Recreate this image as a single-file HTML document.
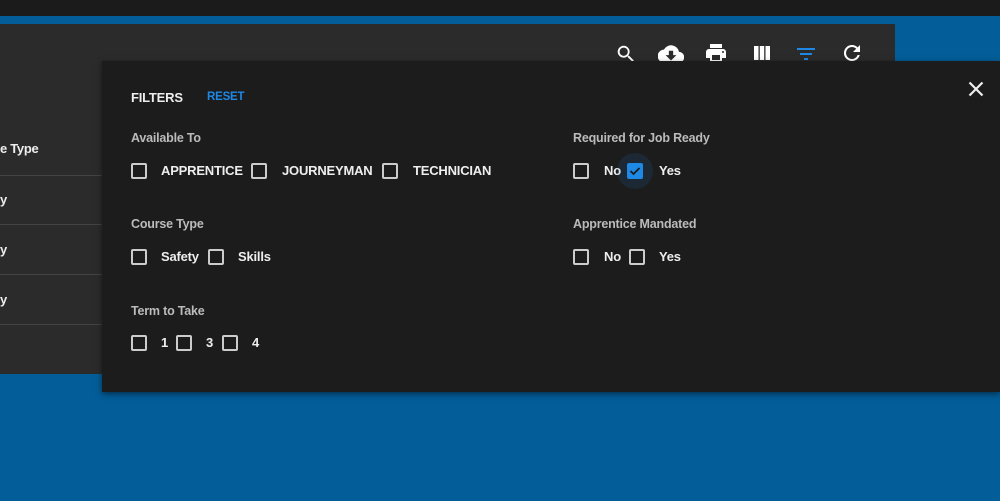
<!DOCTYPE html>
<html><head><style>
*{margin:0;padding:0;box-sizing:border-box}
body{width:1000px;height:501px;background:#035d98;font-family:"Liberation Sans",Roboto,sans-serif;position:relative;overflow:hidden;color:#eee}
.top{position:absolute;left:0;top:0;width:1000px;height:16px;background:#1b1b1b}
.card{position:absolute;left:0;top:24px;width:895px;height:350px;background:#2b2b2b}
.row{position:absolute;left:0;width:102px;border-top:1px solid #444}
.ct{position:absolute;font-size:13px;font-weight:bold;color:#eee;letter-spacing:-0.3px}
.panel{position:absolute;left:102px;top:61px;width:898px;height:331px;background:#1c1c1c;box-shadow:0 2px 6px rgba(0,0,0,.5)}
.t{position:absolute;font-size:14px}
.lab{position:absolute;font-size:12.5px;color:#bbb;font-weight:bold;letter-spacing:-0.2px}
.cb{position:absolute;width:16px;height:16px;border:2px solid #ccc;border-radius:2px}
.opt{position:absolute;font-size:13px;color:#eee;font-weight:bold;letter-spacing:-0.2px;top:0}
svg{position:absolute}
</style></head><body>
<div class="top"></div>
<div class="card">
<div class="ct" style="left:0;top:117px">e Type</div>
<div class="row" style="top:151px"></div>
<div class="ct" style="left:0;top:168px">y</div>
<div class="row" style="top:200px"></div>
<div class="ct" style="left:0;top:218px">y</div>
<div class="row" style="top:250px"></div>
<div class="ct" style="left:0;top:268px">y</div>
<div class="row" style="top:300px"></div>
</div>
<svg style="left:615px;top:43px" width="22" height="22" viewBox="0 0 24 24"><path fill="#fff" d="M15.5 14h-.8l-.3-.3A6.5 6.5 0 1 0 9.5 16a6.5 6.5 0 0 0 4.2-1.6l.3.3v.8l5 5 1.5-1.5-5-5zm-6 0A4.5 4.5 0 1 1 14 9.5 4.5 4.5 0 0 1 9.5 14z"/></svg>
<svg style="left:658px;top:41px" width="26" height="26" viewBox="0 0 24 24"><path fill="#fff" d="M19.4 10A7.5 7.5 0 0 0 5.4 8 6 6 0 0 0 6 20h13a5 5 0 0 0 .4-10zM17 13l-5 5-5-5h3V9h4v4h3z"/></svg>
<svg style="left:704px;top:41px" width="24" height="24" viewBox="0 0 24 24"><path fill="#fff" d="M19 8H5a3 3 0 0 0-3 3v6h4v4h12v-4h4v-6a3 3 0 0 0-3-3zm-3 11H8v-5h8v5zm3-7a1 1 0 1 1 0-2 1 1 0 0 1 0 2zm-1-9H6v4h12V3z"/></svg>
<svg style="left:750px;top:41px" width="24" height="24" viewBox="0 0 24 24"><path fill="#fff" d="M4 5h4.5v14H4zM9.8 5h4.4v14H9.8zM15.5 5H20v14h-4.5z"/></svg>
<svg style="left:794px;top:42px" width="24" height="24" viewBox="0 0 24 24"><path fill="#1e88e5" d="M10 18h4v-2h-4v2zM3 6v2h18V6H3zm3 7h12v-2H6v2z"/></svg>
<svg style="left:840px;top:41px" width="24" height="24" viewBox="0 0 24 24"><path fill="#fff" d="M17.65 6.35A7.96 7.96 0 0 0 12 4a8 8 0 1 0 7.73 10h-2.08A6 6 0 1 1 12 6c1.66 0 3.14.69 4.22 1.78L13 11h7V4l-2.35 2.35z"/></svg>
<div class="panel">
<div class="t" style="left:29px;top:29px;font-weight:bold;font-size:13px;letter-spacing:-0.2px">FILTERS</div>
<div class="t" style="left:105px;top:30px;font-weight:bold;font-size:11.5px;color:#1e88e5;letter-spacing:-0.2px">RESET</div>
<svg style="left:864px;top:18px" width="20" height="20" viewBox="0 0 20 20"><path d="M3.5 3.5l13 13M16.5 3.5l-13 13" stroke="#eee" stroke-width="2.2"/></svg>
<div class="lab" style="left:29px;top:70px">Available To</div>
<div class="cb" style="left:29px;top:102px"></div><div class="opt" style="left:59px;top:102px">APPRENTICE</div>
<div class="cb" style="left:149px;top:102px"></div><div class="opt" style="left:180px;top:102px">JOURNEYMAN</div>
<div class="cb" style="left:280px;top:102px"></div><div class="opt" style="left:311px;top:102px">TECHNICIAN</div>
<div class="lab" style="left:29px;top:156px">Course Type</div>
<div class="cb" style="left:29px;top:188px"></div><div class="opt" style="left:59px;top:188px">Safety</div>
<div class="cb" style="left:106px;top:188px"></div><div class="opt" style="left:136px;top:188px">Skills</div>
<div class="lab" style="left:29px;top:243px">Term to Take</div>
<div class="cb" style="left:29px;top:274px"></div><div class="opt" style="left:59px;top:274px">1</div>
<div class="cb" style="left:74px;top:274px"></div><div class="opt" style="left:104px;top:274px">3</div>
<div class="cb" style="left:120px;top:274px"></div><div class="opt" style="left:150px;top:274px">4</div>
<div class="lab" style="left:471px;top:70px">Required for Job Ready</div>
<div class="cb" style="left:471px;top:102px"></div><div class="opt" style="left:502px;top:102px">No</div>
<div style="position:absolute;left:515px;top:92px;width:36px;height:36px;border-radius:50%;background:rgba(30,136,229,.12)"></div>
<div class="cb" style="left:525px;top:102px;background:#1e88e5;border-color:#1e88e5"></div>
<svg style="left:525px;top:102px" width="16" height="16" viewBox="0 0 16 16"><path d="M3.5 8l3 3 6-6" stroke="#1c1c1c" stroke-width="1.8" fill="none"/></svg>
<div class="opt" style="left:557px;top:102px">Yes</div>
<div class="lab" style="left:471px;top:156px">Apprentice Mandated</div>
<div class="cb" style="left:471px;top:188px"></div><div class="opt" style="left:502px;top:188px">No</div>
<div class="cb" style="left:527px;top:188px"></div><div class="opt" style="left:557px;top:188px">Yes</div>
</div>
</body></html>
